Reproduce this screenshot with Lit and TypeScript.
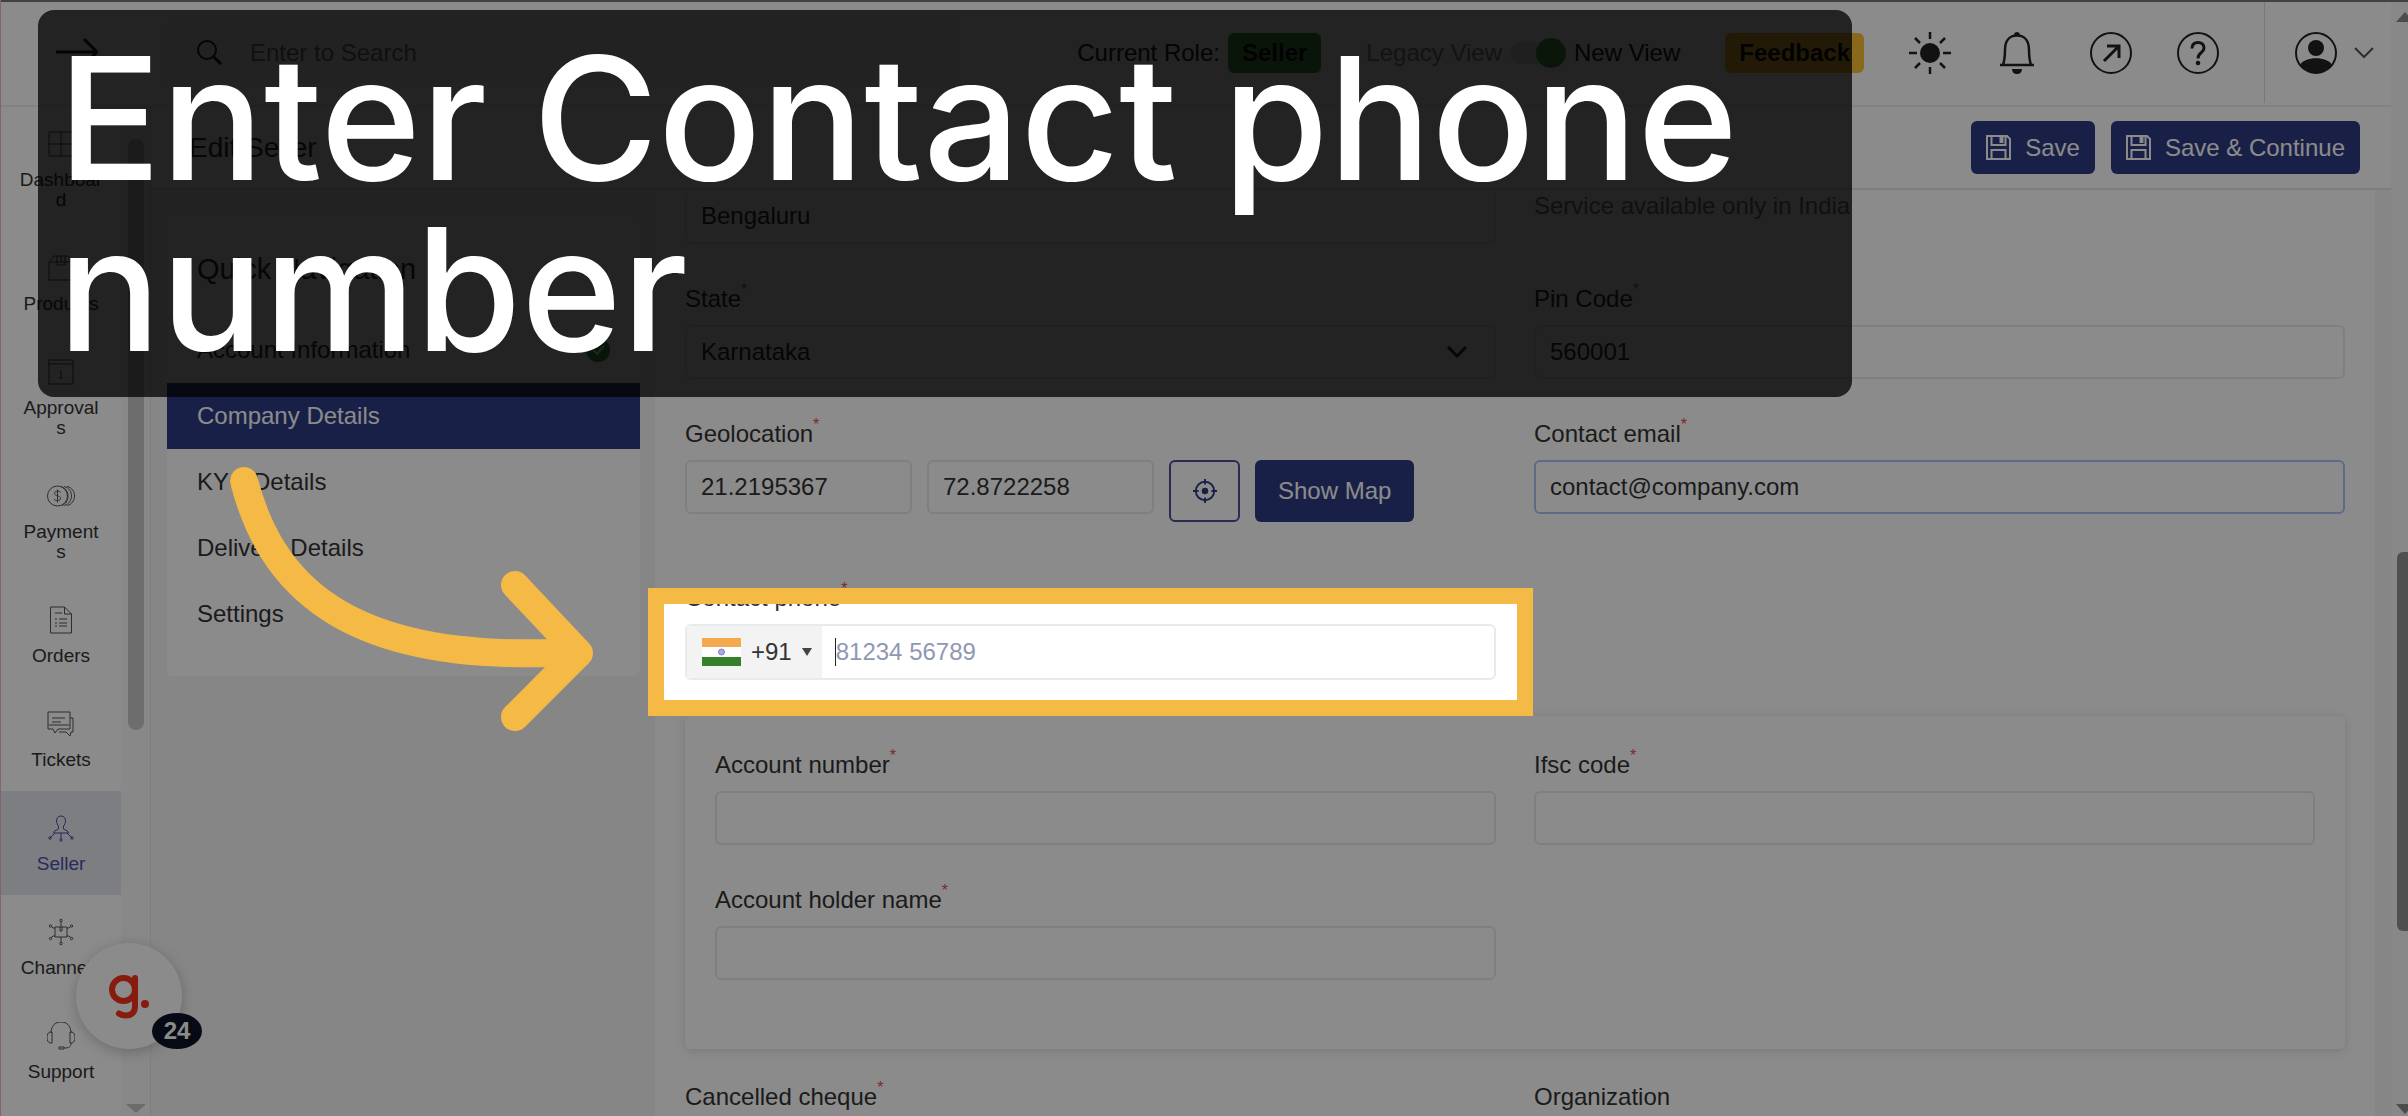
import { LitElement, html, css, svg } from "lit";
import { customElement } from "lit/decorators.js";

const sideIcons: Record<string, unknown> = {
  dashboard: svg`<path d="M2 2h24v24H2zM14 2v24M2 14h24"/>`,
  products: svg`<path d="M2 8l5-6h14l5 6v18H2zM2 8h24M10 2v9h8V2M14 2v6"/>`,
  approvals: svg`<path d="M2 2h24v24H2zM2 6h24M14 12v8M12 20h4M14 9v1"/>`,
  payments: svg`<circle cx="10.500" cy="14" r="10"/><path d="M14 4.500c5 2 7 5 7 9.500s-2 8-6 9.500M17 4.500c5 1 7.500 5 7.500 9.500s-3 8.500-7 9.500M20 4.500c5 1 7.500 5 7.500 9.500s-3 8.500-7 9.500M13.500 10.500c-1-2-6-2-6 .8s6 2 6 5-5 3-6.500 .7M10.500 7.500v13"/>`,
  orders: svg`<path d="M3.500 1h14l7 7v19h-21zM17.500 1v7h7M8 7h7M8 13h2M12 13h8M8 17h2M12 17h8M12 20h8M8 20h2"/>`,
  tickets: svg`<path d="M1 2h22v17H11l-3 4-2-4H1zM5 8h13M5 12h9M23 8h3v14h-2l-1 4-4-4h-7M2 15h20"/>`,
  seller: svg`<path d="M14 2c-3 0-4.500 2-4.500 5 0 2 1 4 2 5v3l-4 2-1 2h15l-1-2-4-2v-3c1-1 2-3 2-5 0-3-1.500-5-4.500-5zM8 19l-5 5M14 19v6M20 19l5 5"/><circle cx="3" cy="24" r="1.200"/><circle cx="14" cy="26" r="1.200"/><circle cx="25" cy="24" r="1.200"/>`,
  channels: svg`<path d="M8 9h12v10H8zM13 9v4h2V9M14 9V3M14 19v6M8 10H6L4 8M8 18H6l-2 2M20 10h2l2-2M20 18h2l2 2"/><circle cx="14" cy="2.500" r="1.200"/><circle cx="14" cy="25.500" r="1.200"/><circle cx="3.500" cy="8" r="1.200"/><circle cx="3.500" cy="20.500" r="1.200"/><circle cx="24.500" cy="8" r="1.200"/><circle cx="24.500" cy="20.500" r="1.200"/>`,
  support: svg`<path d="M4 11C4 4 8 0 14 0s10 4 10 11M5 10H3c-4 1-4 10 0 11h2zM23 10h2c4 1 4 10 0 11h-2zM24 21c0 4-2 5-7 5M12 25h5v2h-5z"/>`,
};

const sideItems = [
  { id: "dashboard", label: "Dashboard" },
  { id: "products", label: "Products" },
  { id: "approvals", label: "Approvals" },
  { id: "payments", label: "Payments" },
  { id: "orders", label: "Orders" },
  { id: "tickets", label: "Tickets" },
  { id: "seller", label: "Seller", active: true },
  { id: "channels", label: "Channels" },
  { id: "support", label: "Support" },
];

const saveIcon = html`<svg class="save-icon" viewBox="0 0 25 25" aria-hidden="true">
  <path d="M1 1h20l3 3v20H1zM5.500 1v9h14V1M14.500 3v4h2V3zM5.500 24v-9h14v9" />
</svg>`;

const label = (id: string, text: string, required = true) =>
  html`<label for=${id}>${text}${required ? html`<span class="star">*</span>` : ""}</label>`;

const field = (id: string, text: string, value = "", cls = "") => html`
  <div class="field">
    ${label(id, text)}
    <input class="box ${cls}" id=${id} .value=${value} />
  </div>
`;

@customElement("app-root")
export class AppRoot extends LitElement {
  static styles = css`
    :host {
      display: flex;
      position: relative;
      height: 100vh;
      overflow: hidden;
      background: #fff;
      color: #333;
      font: 24px/28px "Liberation Sans", Arial, sans-serif;
    }
    * { box-sizing: border-box; }
    svg { display: block; fill: none; stroke: currentColor; flex: none; }
    a { color: inherit; text-decoration: none; }
    button, input, select { font: inherit; color: inherit; margin: 0; }
    button { border: 0; background: none; padding: 0; }

    .app { flex: 1; min-width: 0; display: flex; flex-direction: column; border-left: 1px solid #f3b9bd; }
    header {
      flex: none;
      height: 107px;
      padding-bottom: 2px;
      display: flex;
      align-items: center;
      gap: 45px;
      border-top: 2px solid #77777c;
      border-bottom: 2px solid #eeeef0;
      color: #222;
    }
    .menu { margin-left: 55px; margin-right: 23px; }
    .menu svg { width: 42px; height: 42px; stroke-width: 3; }
    .search {
      flex: 0 1 792px;
      height: 60px;
      display: flex;
      align-items: center;
      gap: 28px;
      padding-left: 31px;
      background: #f6faf8;
    }
    .search svg { width: 25px; height: 25px; stroke-width: 2; }
    .search input { flex: 1; min-width: 0; border: 0; background: none; padding: 0; outline: 0; }
    .search input::placeholder { color: #777; opacity: 1; }
    .tools { margin-left: auto; display: flex; align-items: center; gap: 45px; align-self: stretch; }
    .role, .view { display: flex; align-items: center; gap: 8px; white-space: nowrap; }
    .badge { padding: 6px 14px; border-radius: 6px; background: #4c9a4e; font-weight: bold; color: #111; }
    .feedback { padding: 6px 14px; border-radius: 6px; background: #fcc133; font-weight: bold; color: #111; }
    .muted { color: #8a8a8a; }
    .toggle {
      appearance: none;
      width: 56px;
      height: 22px;
      border-radius: 11px;
      background: #e2e2e2;
      display: flex;
      justify-content: flex-end;
      align-items: center;
    }
    .toggle::before { content: ""; width: 30px; height: 30px; border-radius: 50%; background: #43a047; }
    .tool svg { width: 42px; height: 42px; stroke-width: 3; }
    .bell { width: 49px; }
    .user {
      align-self: stretch;
      display: flex;
      align-items: center;
      gap: 17px;
      padding: 0 17px 0 30px;
      border-left: 1px solid #dcdcdf;
    }
    .user .chev { width: 20px; height: 12px; color: #555; }

    .below { flex: 1; min-height: 0; display: flex; }
    .side { flex: none; width: 120px; }
    .side a {
      display: flex;
      flex-direction: column;
      align-items: center;
      gap: 12px;
      padding: 23px 18px 21px;
      font-size: 19px;
      line-height: 20px;
      text-align: center;
    }
    .side a span { width: 83px; overflow-wrap: anywhere; }
    .side svg { width: 28px; height: 28px; stroke-width: 1; color: #555; }
    .side a.active { background: #e3e7ee; color: #4b4fa8; }
    .side a.active svg { color: #4b4fa8; }
    .track {
      flex: none;
      width: 30px;
      display: flex;
      flex-direction: column;
      align-items: center;
      justify-content: space-between;
      padding: 32px 0 3px;
      background: #f9f9f9;
      border-right: 1px solid #e8e8ea;
    }
    .track i { height: 591px; width: 16px; border-radius: 8px; background: #c9c9c9; }
    .track svg { width: 20px; height: 9px; fill: #c4c4c4; stroke: none; }

    main { flex: 1; min-width: 0; display: flex; flex-direction: column; background: #f6f6f7; }
    .title {
      flex: none;
      height: 83px;
      display: flex;
      align-items: center;
      gap: 16px;
      padding: 0 31px 0 38px;
      background: #fff;
      border-bottom: 2px solid #e6e6e9;
    }
    h1 { margin: 0 auto 0 0; font-size: 28px; font-weight: normal; }
    .primary {
      display: flex;
      align-items: center;
      gap: 14px;
      height: 53px;
      padding: 0 15px;
      border-radius: 6px;
      background: #2f3c84;
      color: #fff;
      white-space: nowrap;
    }
    .save-icon { width: 25px; height: 25px; stroke-width: 2; }
    .cols { flex: 1; min-height: 0; display: flex; gap: 15px; padding: 0 16px; align-items: flex-start; }
    nav.card { flex: none; width: 473px; background: #fff; border-radius: 6px; margin-top: 25px; padding-bottom: 29px; }
    h2 { margin: 0; padding: 40px 30px 34px; font-size: 29px; font-weight: normal; }
    .card a { display: flex; align-items: center; justify-content: space-between; height: 66px; padding: 0 30px; }
    .card a.active { background: #2f3c84; color: #fff; }
    .tick { width: 24px; height: 24px; fill: #3f9a42; stroke: #fff; stroke-width: 2; }

    .panel {
      flex: 1;
      min-width: 0;
      background: #fff;
      padding: 0 30px;
      display: grid;
      grid-template-columns: 1fr 1fr;
      column-gap: 38px;
      row-gap: 41px;
    }
    .field { display: flex; flex-direction: column; min-width: 0; }
    .field label { height: 28px; margin-bottom: 12px; align-self: flex-start; }
    .star { color: #e0503f; font-size: 16px; line-height: 0; vertical-align: 12px; }
    .box {
      width: 100%;
      height: 54px;
      padding: 0 14px;
      border: 2px solid #e9eaee;
      border-radius: 6px;
      background: none;
      outline: 0;
      appearance: none;
    }
    .top .box { border-top: 0; }
    .focus { border-color: #a9c6f2; }
    .hint { padding-top: 2px; color: #777a85; }
    .select { display: grid; align-items: center; }
    .select > * { grid-area: 1 / 1; }
    .select svg { width: 20px; height: 12px; justify-self: end; margin-right: 29px; stroke-width: 3; pointer-events: none; }
    .geo { display: flex; gap: 15px; }
    .geo .box { flex: none; width: 227px; }
    .geo button { height: 62px; border-radius: 6px; }
    .locate { width: 71px; display: grid; place-items: center; border: 2px solid #4b4f93; color: #2f3c84; }
    .locate svg { width: 24px; height: 24px; stroke-width: 2; }
    .geo .primary { padding: 0 23px; }

    .phone-field { position: relative; margin-top: 21px; }
    .phone { height: 56px; display: flex; align-items: center; border: 2px solid #e9eaee; border-radius: 6px; }
    .code { height: 52px; display: flex; align-items: center; gap: 10px; padding: 0 10px 0 15px; background: #f3f3f4; }
    .flag { width: 39px; height: 28px; stroke: none; }
    .code .caret { width: 10px; height: 8px; fill: #444; stroke: none; }
    .phone input { flex: 1; min-width: 0; height: 28px; border: 0; border-left: 1px solid #222; margin-left: 13px; padding: 0; background: none; outline: 0; }
    .phone input::placeholder { color: #8f98b3; opacity: 1; }
    .spotlight {
      position: absolute;
      inset: 4px -37px -36px;
      border: 16px solid #f5ba45;
      box-shadow: 0 0 0 3000px rgba(0, 0, 0, 0.455);
      z-index: 2;
      pointer-events: none;
    }

    .bank {
      grid-column: 1 / -1;
      margin-top: -5px;
      padding: 35px 30px 69px;
      border-radius: 6px;
      box-shadow: 0 2px 10px rgba(40, 40, 60, 0.16);
      display: grid;
      grid-template-columns: 1fr 1fr;
      column-gap: 38px;
      row-gap: 41px;
    }
    .last { margin-top: -7px; }

    .page-scroll { flex: none; width: 17px; display: flex; flex-direction: column; align-items: flex-end; background: #fafafa; border-top: 2px solid #77777c; overflow: hidden; }
    .page-scroll svg { width: 12px; height: 10px; margin-top: 10px; fill: #8c8c8c; stroke: none; }
    .page-scroll svg:last-child { margin: 0 0 2px; }
    .space-a { flex: 530; }
    .space-b { flex: 173; }
    .thumb { flex: 379; width: 11px; border-radius: 6px 0 0 6px; background: #929292; }

    .helper {
      position: absolute;
      left: 76px;
      bottom: 67px;
      width: 106px;
      height: 106px;
      border-radius: 50%;
      background: #fff;
      box-shadow: 0 3px 14px rgba(0, 0, 0, 0.22);
      display: grid;
      place-items: center;
      color: #f6331b;
    }
    .helper svg { width: 42px; height: 46px; stroke-width: 6; stroke-linecap: round; }
    .count {
      position: absolute;
      right: -20px;
      bottom: 0;
      width: 50px;
      height: 36px;
      border-radius: 50%;
      background: #0c1426;
      color: #fff;
      font-weight: bold;
      font-size: 24px;
      line-height: 36px;
      text-align: center;
    }
    .arrow { position: absolute; left: 220px; top: 460px; width: 380px; height: 280px; color: #f5ba45; stroke-width: 28; stroke-linecap: round; stroke-linejoin: round; z-index: 3; }
    .caption {
      position: absolute;
      left: 38px;
      right: 556px;
      top: 10px;
      height: 387px;
      margin: 0;
      padding: 22px 20px;
      border-radius: 16px;
      background: rgba(0, 0, 0, 0.75);
      color: #fff;
      font: 500 171px/171px Inter, "Open Sans", sans-serif;
      white-space: nowrap;
      z-index: 4;
    }
  `;

  render() {
    return html`
      <div class="app">
        <header>
          <button class="menu" aria-label="Expand menu">
            <svg viewBox="0 0 42 42"><path d="M0 20h40M28 7l13 13-13 13" /></svg>
          </button>
          <div class="search">
            <svg viewBox="0 0 25 25"><circle cx="10" cy="10" r="9" /><path stroke-width="3" d="M17 17l7 7" /></svg>
            <input type="search" aria-label="Search" placeholder="Enter to Search" />
          </div>
          <div class="tools">
            <div class="role">Current Role: <span class="badge">Seller</span></div>
            <label class="view">
              <span class="muted">Legacy View</span>
              <input class="toggle" type="checkbox" checked />
              <span>New View</span>
            </label>
            <button class="feedback">Feedback</button>
            <button class="tool" aria-label="Theme">
              <svg viewBox="0 0 42 42"><circle cx="21" cy="21" r="10" fill="currentColor" stroke="none" />
                <path stroke-width="2.500" d="M21 0v7M21 35v7M0 21h8M34 21h8M6 6l5 5M31 31l5 5M6 36l5-5M31 11l5-5" /></svg>
            </button>
            <button class="tool bell" aria-label="Notifications">
              <svg viewBox="0 0 42 42"><path stroke-width="2.500" d="M4 33h34M7 33c2-6 2-9 2-15C9 8 14 3.500 21 3.500S33 8 33 18c0 6 0 9 2 15" />
                <path fill="currentColor" stroke="none" d="M16 37h10c0 3-2 5-5 5s-5-2-5-5zM18 3c0-4 6-4 6 0z" /></svg>
            </button>
            <button class="tool" aria-label="Open">
              <svg viewBox="0 0 42 42"><circle cx="21" cy="21" r="20" stroke-width="2" /><path d="M14 29l15-15M17 14h12v12" /></svg>
            </button>
            <button class="tool" aria-label="Help">
              <svg viewBox="0 0 42 42"><circle cx="21" cy="21" r="20" stroke-width="2" />
                <path d="M15 16.500c0-4 2.500-6 6-6s6 2 6 5.500c0 5-6 4.500-6 10.500" /><circle cx="21" cy="31" r="2.300" fill="currentColor" stroke="none" /></svg>
            </button>
            <button class="user tool" aria-label="Account">
              <svg viewBox="0 0 42 42"><circle cx="21" cy="21" r="20" stroke-width="2" /><circle cx="21" cy="16" r="8" fill="currentColor" stroke="none" />
                <path fill="currentColor" stroke="none" d="M5 33c4-9 28-9 32 0-8 11-24 11-32 0z" /></svg>
              <svg class="chev" viewBox="0 0 20 12"><path stroke-width="2" d="M1 1l9 9 9-9" /></svg>
            </button>
          </div>
        </header>
        <div class="below">
          <nav class="side" aria-label="Main">
            ${sideItems.map(
              (i) => html`<a href="#${i.id}" class=${i.active ? "active" : ""}>
                <svg viewBox="0 0 28 28" aria-hidden="true">${sideIcons[i.id]}</svg><span>${i.label}</span>
              </a>`
            )}
          </nav>
          <div class="track"><i></i><svg viewBox="0 0 20 9"><path d="M0 0h20L10 9z" /></svg></div>
          <div class="helper">
            <svg viewBox="0 0 42 46"><circle cx="15.500" cy="16.500" r="11.500" /><path d="M27 5v28c0 7-4 9.500-9 9.500-3 0-5-.5-7-2" /><circle cx="37" cy="31" r="4" fill="currentColor" stroke="none" /></svg>
            <span class="count">24</span>
          </div>
          <main>
            <div class="title">
              <h1>Edit Seller</h1>
              <button class="primary">${saveIcon}Save</button>
              <button class="primary">${saveIcon}Save &amp; Continue</button>
            </div>
            <div class="cols">
              <nav class="card" aria-label="Quick Navigation">
                <h2>Quick Navigation</h2>
                <a href="#account">Account Information<svg class="tick" viewBox="0 0 24 24"><circle cx="12" cy="12" r="12" stroke="none" /><path d="M7 12l4 4 7-8" /></svg></a>
                <a href="#company" class="active">Company Details</a>
                <a href="#kyc">KYC Details</a>
                <a href="#delivery">Delivery Details</a>
                <a href="#settings">Settings</a>
              </nav>
              <form class="panel">
                <div class="field top"><input class="box" aria-label="City" .value=${"Bengaluru"} /></div>
                <div class="hint">Service available only in India</div>
                <div class="field">
                  ${label("state", "State")}
                  <div class="select">
                    <select class="box" id="state"><option>Karnataka</option></select>
                    <svg viewBox="0 0 20 12"><path d="M1 1l9 9 9-9" /></svg>
                  </div>
                </div>
                ${field("pin", "Pin Code", "560001")}
                <div class="field">
                  ${label("lat", "Geolocation")}
                  <div class="geo">
                    <input class="box" id="lat" .value=${"21.2195367"} />
                    <input class="box" aria-label="Longitude" .value=${"72.8722258"} />
                    <button type="button" class="locate" aria-label="Use my location">
                      <svg viewBox="0 0 26 26"><circle cx="13" cy="13" r="10" /><circle cx="13" cy="13" r="3.500" fill="currentColor" stroke="none" /><path d="M13 0v6M13 20v6M0 13h6M20 13h6" /></svg>
                    </button>
                    <button type="button" class="primary">Show Map</button>
                  </div>
                </div>
                ${field("email", "Contact email", "contact@company.com", "focus")}
                <div class="field phone-field">
                  ${label("phone", "Contact phone")}
                  <div class="phone">
                    <button type="button" class="code">
                      <svg class="flag" viewBox="0 0 39 28"><path fill="#f5a94f" d="M0 0h39v9H0z" /><path fill="#fff" d="M0 9h39v10H0z" /><path fill="#35802a" d="M0 19h39v9H0z" /><circle cx="19.500" cy="14" r="3" fill="#a9a9e0" stroke="#7f7fd0" /></svg>
                      +91
                      <svg class="caret" viewBox="0 0 10 8"><path d="M0 0h10L5 8z" /></svg>
                    </button>
                    <input id="phone" type="tel" placeholder="81234 56789" />
                  </div>
                  <div class="spotlight"></div>
                </div>
                <div class="bank">
                  ${field("acc", "Account number")} ${field("ifsc", "Ifsc code")} ${field("holder", "Account holder name")}
                </div>
                <div class="field last">
                  ${label("cheque", "Cancelled cheque")}
                  <input class="box" id="cheque" />
                </div>
                <div class="field last">
                  ${label("org", "Organization", false)}
                  <input class="box" id="org" />
                </div>
              </form>
            </div>
          </main>
        </div>
      </div>
      <div class="page-scroll">
        <svg viewBox="0 0 12 10"><path d="M0 10L9 0l9 10z" /></svg>
        <div class="space-a"></div>
        <div class="thumb"></div>
        <div class="space-b"></div>
        <svg viewBox="0 0 12 10"><path d="M0 0l9 10 9-10z" /></svg>
      </div>
      <svg class="arrow" viewBox="220 460 380 280"><path d="M244 481C270 580 340 665 570 652M515 585L579 653L515 717" /></svg>
      <p class="caption">Enter Contact phone<br />number</p>
    `;
  }
}
